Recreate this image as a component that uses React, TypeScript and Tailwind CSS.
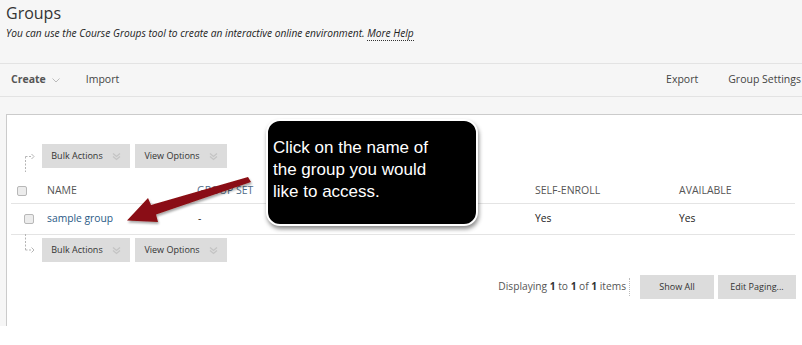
import React from 'react'

const Chevrons = () => (
  <svg width="9" height="9" viewBox="0 0 9 9" className="ml-[9px]" fill="none" stroke="#c4c4c4" strokeWidth="1.3">
    <path d="M1 1.5 L4.5 4.5 L8 1.5" />
    <path d="M1 4.5 L4.5 7.5 L8 4.5" />
  </svg>
)

const GrayButton = ({ label, w }: { label: string; w: string }) => (
  <button type="button" className={`${w} h-[24px] bg-[#dcdcdc] text-[9px] text-[#333] flex items-center justify-center`}>
    {label}
    <Chevrons />
  </button>
)

const Connector = ({ up }: { up?: boolean }) => (
  <svg width="14" height="20" viewBox="0 0 14 20" className="shrink-0 overflow-visible" fill="none" stroke="#b5b5b5" strokeWidth="1">
    {up ? (
      <>
        <path d="M2.5 1.5 V17" strokeDasharray="2 1.5" />
        <path d="M2.5 1.5 H9" strokeDasharray="2 1.5" />
        <path d="M8.5 -1 L11 1.5 L8.5 4" />
      </>
    ) : (
      <>
        <path d="M2.5 0 V16" strokeDasharray="2 1.5" />
        <path d="M2.5 16 H9" strokeDasharray="2 1.5" />
        <path d="M8.5 13.5 L11 16 L8.5 18.5" />
      </>
    )}
  </svg>
)

const Checkbox = () => (
  <span className="block w-[10px] h-[10px] rounded-[2px] border border-[#b8b8b8] bg-[#ececec]" />
)

const ActionRow = ({ up, className }: { up?: boolean; className: string }) => (
  <div className={`flex items-start h-[24px] ${className}`}>
    <div className={`w-[35px] pl-[16px] flex ${up ? 'mt-[11px]' : 'mt-[-4px]'}`}>
      <Connector up={up} />
    </div>
    <div className="flex gap-[5px]">
      <GrayButton label="Bulk Actions" w="w-[88px]" />
      <GrayButton label="View Options" w="w-[92px]" />
    </div>
  </div>
)

const cols = 'grid grid-cols-[36px_150px_338px_144px_116px] items-center'

const App = () => {
  return (
    <div className="relative w-[802px] h-[345px] overflow-hidden bg-white" style={{ fontFamily: '"Open Sans", sans-serif' }}>
      <div className="h-[326px] bg-[#f6f6f6] flex flex-col">
        <header className="px-[6px] pt-[2px] h-[63px]">
          <h1 className="text-[16px] leading-[22px] text-[#333]">Groups</h1>
          <p className="text-[10.2px] italic text-[#222] leading-[16px] mt-[1px]">
            You can use the Course Groups tool to create an interactive online environment.{' '}
            <span className="border-b border-dotted border-[#333]">More Help</span>
          </p>
        </header>

        <nav className="h-[34px] border-y border-[#e3e3e3] flex items-center text-[10.5px] text-[#444] pr-[1px]">
          <span className="ml-[11px] font-bold text-[#555]">Create</span>
          <svg width="8" height="5" viewBox="0 0 8 5" className="ml-[6px] mt-[1px]" fill="none" stroke="#bbb" strokeWidth="1">
            <path d="M0.5 0.5 L4 4 L7.5 0.5" />
          </svg>
          <span className="ml-[26px]">Import</span>
          <span className="ml-auto">Export</span>
          <span className="ml-[30px] whitespace-nowrap">Group Settings</span>
        </nav>

        <section className="mt-[17px] ml-[6px] flex-1 bg-white border-t border-l border-[#cbcbcb]">
          <ActionRow className="mt-[29px]" up />

          <div className="ml-[4px] w-[784px] text-[10.3px]">
            <div className={`${cols} h-[25px] mt-[11px] border-b border-[#e4e4e4] text-[#555] text-[10.5px]`}>
              <div className="pl-[6px]">
                <Checkbox />
              </div>
              <div>NAME</div>
              <div className="text-[#4c6a86]">GROUP SET</div>
              <div>SELF-ENROLL</div>
              <div>AVAILABLE</div>
            </div>
            <div className={`${cols} h-[31px] border-b border-[#e4e4e4] text-[#222]`}>
              <div className="pl-[13px]">
                <Checkbox />
              </div>
              <div className="text-[#2a5a86]">sample group</div>
              <div className="pl-[1px]">-</div>
              <div>Yes</div>
              <div>Yes</div>
            </div>
          </div>

          <ActionRow className="mt-[3px]" />

          <div className="flex items-center justify-end w-[789px] mt-[13px]">
            <span className="text-[10.2px] text-[#555]">
              Displaying <b className="text-[#333]">1</b> to <b className="text-[#333]">1</b> of <b className="text-[#333]">1</b> items
            </span>
            <span className="ml-[3px] mr-[10px] h-[18px] border-l border-dotted border-[#bbb]" />
            <button type="button" className="w-[74px] h-[24px] bg-[#dcdcdc] text-[9px] text-[#333]">Show All</button>
            <button type="button" className="ml-[4px] w-[78px] h-[24px] bg-[#dcdcdc] text-[9px] text-[#333]">Edit Paging...</button>
          </div>
        </section>
      </div>

      <svg className="absolute left-[120px] top-[170px]" width="140" height="60" viewBox="0 0 140 60">
        <defs>
          <filter id="sh" x="-20%" y="-50%" width="140%" height="200%">
            <feDropShadow dx="1" dy="2" stdDeviation="1.2" floodColor="#000" floodOpacity="0.35" />
          </filter>
        </defs>
        <g filter="url(#sh)" fill="#8a0f12">
          <path d="M128 7 L131 12 L36 44.5 L38 52 L7 50.5 L28 28 L31 35 Z" />
        </g>
      </svg>

      <div className="absolute left-[266px] top-[119px] w-[212px] h-[107px] rounded-[14px] bg-black border-2 border-white shadow-[1px_3px_4px_rgba(0,0,0,0.45)] pl-[5px] pt-[16px]">
        <p className="w-[175px] text-white text-[17px] leading-[22px]" style={{ fontFamily: '"Liberation Sans", Arial, sans-serif' }}>
          Click on the name of the group you would like to access.
        </p>
      </div>
    </div>
  )
}

export default App
